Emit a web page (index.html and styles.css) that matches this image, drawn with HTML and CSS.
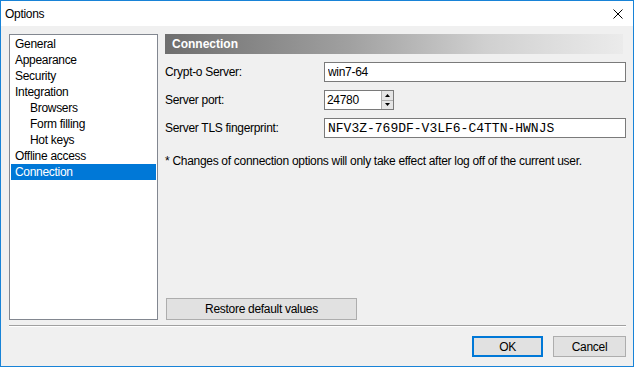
FILE: index.html
```html
<!DOCTYPE html>
<html lang="en">
<head>
    <meta charset="UTF-8">
    <title>Options</title>
    <link rel="stylesheet" href="styles.css">
</head>
<body>
    <div class="window">
        <div class="titlebar">
            <span class="title">Options</span>
            <svg class="close" width="10" height="10" viewBox="0 0 10 10">
                <path d="M0.5 0.5 L9.5 9.5 M9.5 0.5 L0.5 9.5" stroke="#000" stroke-width="1" fill="none"/>
            </svg>
        </div>
        <div class="content">
            <ul class="tree">
                <li>General</li>
                <li>Appearance</li>
                <li>Security</li>
                <li>Integration</li>
                <li class="sub">Browsers</li>
                <li class="sub">Form filling</li>
                <li class="sub">Hot keys</li>
                <li>Offline access</li>
                <li class="selected">Connection</li>
            </ul>
            <div class="panel">
                <div class="panel-header">Connection</div>
                <div class="field">
                    <label for="server">Crypt-o Server:</label>
                    <input type="text" id="server" class="text-input" value="win7-64">
                </div>
                <div class="field">
                    <label for="port">Server port:</label>
                    <div class="spin">
                        <input type="text" id="port" value="24780">
                        <div class="spin-buttons">
                            <span class="spin-btn"><svg width="5" height="3" viewBox="0 0 5 3"><path d="M2.5 0 L5 3 L0 3 Z" fill="#000"/></svg></span>
                            <span class="spin-btn"><svg width="5" height="3" viewBox="0 0 5 3"><path d="M0 0 L5 0 L2.5 3 Z" fill="#000"/></svg></span>
                        </div>
                    </div>
                </div>
                <div class="field">
                    <label for="fingerprint">Server TLS fingerprint:</label>
                    <input type="text" id="fingerprint" class="text-input mono" value="NFV3Z-769DF-V3LF6-C4TTN-HWNJS">
                </div>
                <p class="note">* Changes of connection options will only take effect after log off of the current user.</p>
                <button class="btn restore">Restore default values</button>
            </div>
        </div>
        <div class="separator"></div>
        <div class="footer">
            <button class="btn default">OK</button>
            <button class="btn">Cancel</button>
        </div>
    </div>
</body>
</html>
```

FILE: styles.css
```css
body {
    margin: 0;
    font-family: 'Liberation Sans', Arial, sans-serif;
    font-size: 12px;
    letter-spacing: -0.3px;
    color: #000;
}

.window {
    width: 634px;
    height: 367px;
    box-sizing: border-box;
    border: 1px solid #1883d7;
    background: #f0f0f0;
    display: flex;
    flex-direction: column;
}

.titlebar {
    height: 25px;
    background: #fff;
    display: flex;
    align-items: center;
    justify-content: space-between;
    padding: 0 10px 0 4px;
}

.title {
    font-size: 12px;
}

.close {
    margin-top: 1px;
}

.content {
    display: flex;
    gap: 7px;
    padding: 8px 7px 0 8px;
    height: 286px;
}

.tree {
    list-style: none;
    margin: 0;
    padding: 1px;
    box-sizing: border-box;
    width: 149px;
    border: 1px solid #828790;
    background: #fff;
}

.tree li {
    height: 16px;
    line-height: 16px;
    padding-left: 4px;
}

.tree li.sub {
    padding-left: 19px;
}

.tree li.selected {
    background: #0078d7;
    color: #fff;
}

.panel {
    flex: 1;
    display: flex;
    flex-direction: column;
}

.panel-header {
    height: 20px;
    line-height: 20px;
    padding-left: 7px;
    margin-right: 3px;
    font-weight: bold;
    letter-spacing: 0;
    color: #fff;
    background: linear-gradient(to right, #6e6e6e, #a0a0a0 40%, #d0d0d0 70%, #ebebeb);
}

.field {
    display: flex;
    align-items: center;
    margin-top: 8px;
}

.field label {
    width: 159px;
}

.text-input {
    flex: 1;
    height: 20px;
    box-sizing: border-box;
    border: 1px solid #7a7a7a;
    padding: 0 3px;
    font-family: inherit;
    font-size: 12px;
    letter-spacing: inherit;
    outline: none;
}

.mono {
    font-family: 'Liberation Mono', 'Courier New', monospace;
    font-size: 13px;
    letter-spacing: 0;
}

.spin {
    display: flex;
    height: 20px;
    box-sizing: border-box;
    border: 1px solid #7a7a7a;
    background: #fff;
    width: 70px;
}

.spin input {
    width: 52px;
    border: none;
    padding: 0 2px;
    font-family: inherit;
    font-size: 12px;
    letter-spacing: inherit;
    outline: none;
}

.spin-buttons {
    display: flex;
    flex-direction: column;
    border-left: 1px solid #adadad;
    width: 15px;
}

.spin-btn {
    flex: 1;
    display: flex;
    align-items: center;
    justify-content: center;
    background: #e5e5e5;
}

.spin-btn + .spin-btn {
    border-top: 1px solid #adadad;
}

.note {
    margin: 16px 0 0 0;
}

.btn {
    height: 21px;
    box-sizing: border-box;
    background: #e1e1e1;
    border: 1px solid #adadad;
    font-family: inherit;
    font-size: 12px;
    letter-spacing: inherit;
    color: #000;
    padding: 0;
}

.restore {
    margin-top: auto;
    margin-left: 1px;
    width: 191px;
    height: 22px;
}

.separator {
    margin: 5px 7px 0 8px;
    border-top: 1px solid #a0a0a0;
    border-bottom: 1px solid #fff;
}

.footer {
    display: flex;
    justify-content: flex-end;
    gap: 10px;
    padding: 9px 7px 0 0;
}

.footer .btn {
    width: 73px;
}

.footer .default {
    width: 71px;
    border: 2px solid #0078d7;
}
```
